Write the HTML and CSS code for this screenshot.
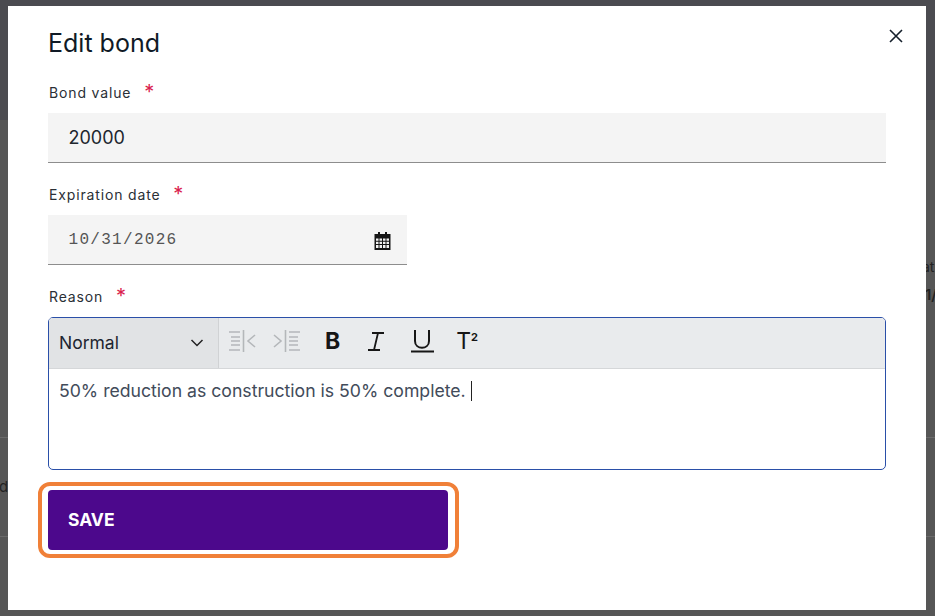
FILE: index.html
```html
<!DOCTYPE html>
<html lang="en">
<head>
    <meta charset="UTF-8">
    <title>Edit bond</title>
    <link rel="stylesheet" href="styles.css">
</head>
<body>
    <div class="page-behind">
        <div class="behind-top"></div>
        <div class="behind-line line-one"></div>
        <div class="behind-line line-two"></div>
        <span class="behind-text text-d">d</span>
        <span class="behind-text text-at">at</span>
        <span class="behind-text text-date">1/</span>
    </div>

    <div class="backdrop">
        <div class="modal">
            <button class="close-button" aria-label="Close">
                <svg width="14" height="14" viewBox="0 0 14 14"><path d="M1 1 L13 13 M13 1 L1 13" stroke="#16202c" stroke-width="1.6" fill="none"/></svg>
            </button>
            <h2 class="modal-title">Edit bond</h2>

            <label class="field-label">Bond value <span class="required">*</span></label>
            <div class="text-input">20000</div>

            <label class="field-label">Expiration date <span class="required">*</span></label>
            <div class="text-input date-input">
                <span class="date-value">10/31/2026</span>
                <svg class="calendar-icon" width="17" height="18" viewBox="0 0 17 18">
                    <path fill="#161616" d="M4 0h2v2h5V0h2v2h3.500v16H.500V2H4z"/>
                    <path fill="#f4f4f4" d="M2 6.500h2.500v2.300H2zM5.500 6.500H8v2.300H5.500zM9 6.500h2.500v2.300H9zM12.500 6.500H15v2.300h-2.500zM2 9.800h2.500v2.300H2zM5.500 9.800H8v2.300H5.500zM9 9.800h2.500v2.300H9zM12.500 9.800H15v2.300h-2.500zM2 13.100h2.500v2.900H2zM5.500 13.100H8v2.900H5.500zM9 13.100h2.500v2.900H9zM12.500 13.100H15v2.900h-2.500z"/>
                </svg>
            </div>

            <label class="field-label">Reason <span class="required">*</span></label>
            <div class="editor">
                <div class="editor-toolbar">
                    <div class="style-select">
                        <span>Normal</span>
                        <svg width="14" height="8" viewBox="0 0 14 8"><path d="M1.500 1 L7 6.500 L12.500 1" stroke="#222" stroke-width="1.500" fill="none"/></svg>
                    </div>
                    <div class="tool-group">
                        <svg class="tool-icon" width="28" height="24" viewBox="0 0 28 24">
                            <path d="M1 3h11M3 8h9M3 12h9M3 16h9M1 21h11M15.500 1v22M27 6l-7 6 7 6" stroke="#b4b7ba" stroke-width="1.600" fill="none"/>
                        </svg>
                        <svg class="tool-icon" width="28" height="24" viewBox="0 0 28 24">
                            <path d="M1 6l7 6-7 6M12.500 1v22M16 3h11M16 8h9M16 12h9M16 16h9M16 21h11" stroke="#b4b7ba" stroke-width="1.600" fill="none"/>
                        </svg>
                        <span class="tool tool-bold">B</span>
                        <svg class="tool-icon" width="18" height="22" viewBox="0 0 18 22">
                            <path d="M5 3h12M1 20h12M11 3L7 20" stroke="#161616" stroke-width="1.800" fill="none"/>
                        </svg>
                        <svg class="tool-icon" width="23" height="24" viewBox="0 0 23 24">
                            <path d="M4 1v11c0 9 14 9 14 0V1" stroke="#161616" stroke-width="2" fill="none"/>
                            <path d="M0 22.500h23" stroke="#161616" stroke-width="2"/>
                        </svg>
                        <span class="tool tool-super">T<sup>2</sup></span>
                    </div>
                </div>
                <div class="editor-body">50% reduction as construction is 50% complete.<span class="caret"></span></div>
            </div>

            <div class="save-highlight">
                <button class="save-button">SAVE</button>
            </div>
        </div>
    </div>
</body>
</html>
```

FILE: styles.css
```css
html, body {
    margin: 0;
    padding: 0;
    height: 616px;
    overflow: hidden;
}

body {
    position: relative;
    font-family: 'Inter', sans-serif;
    background-color: #565656;
    color: #161616;
}

/* page under the modal, only slivers show */
.page-behind {
    position: absolute;
    inset: 0;
}

.behind-top {
    height: 120px;
    background-color: #4b4b50;
}

.behind-line {
    position: absolute;
    left: 0;
    right: 0;
    height: 1px;
    background-color: #6a6a6a;
}

.line-one {
    top: 437px;
}

.line-two {
    top: 536px;
}

.behind-text {
    position: absolute;
    font-size: 15px;
    line-height: 18px;
    color: #222;
}

.text-d {
    left: -1px;
    top: 478px;
}

.text-at {
    left: 922px;
    top: 258px;
    font-size: 14px;
}

.text-date {
    left: 925px;
    top: 286px;
    font-weight: 600;
}

.backdrop {
    position: relative;
    padding: 6px 9px 6px 8px;
}

.modal {
    position: relative;
    box-sizing: border-box;
    height: 604px;
    padding: 20px 40px 0;
    background-color: #fff;
}

.close-button {
    position: absolute;
    top: 23px;
    right: 23px;
    display: flex;
    padding: 0;
    border: none;
    background: none;
}

.modal-title {
    margin: 0;
    font-size: 25px;
    font-weight: 400;
    line-height: 34px;
    color: #101a26;
}

.field-label {
    display: block;
    margin-top: 22px;
    padding-left: 1px;
    font-size: 14px;
    line-height: 20px;
    letter-spacing: 0.85px;
    color: #2a2f36;
}

.modal-title + .field-label {
    margin-top: 23px;
}

.required {
    position: relative;
    top: 1px;
    margin-left: 8px;
    font-size: 20px;
    line-height: 0;
    color: #da1e4e;
}

.text-input {
    box-sizing: border-box;
    display: flex;
    align-items: center;
    justify-content: space-between;
    height: 50px;
    margin-top: 10px;
    padding: 0 16px 0 20.500px;
    background-color: #f4f4f4;
    border-bottom: 1px solid #8d8d8d;
    font-size: 18px;
    color: #20262e;
}

.date-input {
    width: 359px;
}

.date-value {
    font-family: 'Liberation Mono', monospace;
    font-size: 16px;
    letter-spacing: 1.300px;
    color: #555;
}

.calendar-icon {
    margin-top: 2px;
}

.editor {
    box-sizing: border-box;
    height: 153px;
    margin-top: 10px;
    border: 1px solid #2a4fa8;
    border-radius: 5px;
    overflow: hidden;
}

.editor-toolbar {
    display: flex;
    height: 50px;
    background-color: #e9ebed;
    border-bottom: 1px solid #d5d7d9;
}

.style-select {
    box-sizing: border-box;
    display: flex;
    align-items: center;
    justify-content: space-between;
    width: 170px;
    padding: 0 14px 2px 10px;
    background-color: #e1e3e5;
    border-right: 1px solid #d0d2d4;
    font-size: 17.500px;
    color: #1d2530;
}

.style-select svg {
    margin-top: 2px;
}

.tool-group {
    display: flex;
    align-items: center;
    padding: 0 0 4px 9px;
}

.tool-icon {
    flex-shrink: 0;
}

.tool-group .tool-icon:nth-child(2) {
    margin-left: 17px;
}

.tool-group .tool-icon:nth-child(4) {
    margin-left: 27px;
}

.tool-group .tool-icon:nth-child(5) {
    margin-left: 26px;
}

.tool {
    font-size: 23px;
    line-height: 24px;
    color: #161616;
}

.tool-bold {
    margin-left: 24px;
    font-weight: 700;
}

.tool-super {
    margin-left: 22px;
    font-weight: 400;
}

.tool-super sup {
    font-size: 11px;
    font-weight: 700;
    line-height: 0;
    vertical-align: 8px;
}

.editor-body {
    padding: 11px 10px 0;
    font-size: 17.650px;
    line-height: 22px;
    color: #424b5a;
}

.caret {
    display: inline-block;
    width: 1px;
    height: 20px;
    margin-left: 5px;
    background-color: #222;
    vertical-align: -4px;
}

/* orange marker drawn round the button */
.save-highlight {
    box-sizing: border-box;
    width: 421px;
    height: 76px;
    margin: 12px 0 0 -10px;
    padding: 4px 7px 4px 6px;
    border: 4px solid #f08038;
    border-radius: 12px;
}

.save-button {
    display: block;
    box-sizing: border-box;
    width: 400px;
    height: 60px;
    padding: 0 20px 2px;
    border: none;
    border-radius: 4px;
    background-color: #4c088c;
    color: #fff;
    font-family: 'Inter', sans-serif;
    font-size: 17.500px;
    font-weight: 700;
    text-align: left;
}
```
